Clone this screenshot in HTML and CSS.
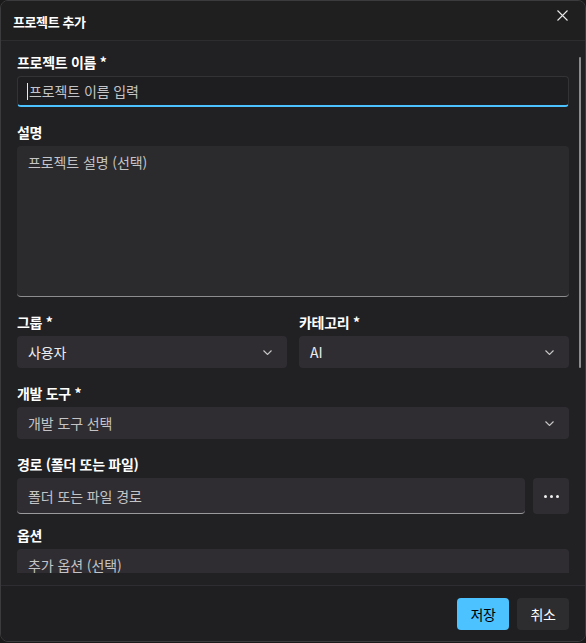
FILE: index.html
```html
<!DOCTYPE html>
<html lang="ko">
<head>
<meta charset="utf-8">
<link rel="stylesheet" href="styles.css">
</head>
<body>
<div class="dialog">
  <div class="header">
    <div class="title">프로젝트 추가</div>
    <div class="close">
      <svg width="11" height="11" viewBox="0 0 11 11"><path d="M0.5 0.5 L10.5 10.5 M10.5 0.5 L0.5 10.5" stroke="#e8e8e8" stroke-width="1.1" fill="none"/></svg>
    </div>
  </div>
  <div class="body">
    <div class="scroll">
      <div class="field">
        <div class="label">프로젝트 이름 *</div>
        <div class="control input focused"><span class="caret"></span><span class="ph">프로젝트 이름 입력</span></div>
      </div>
      <div class="field">
        <div class="label">설명</div>
        <div class="control textarea"><span class="ph">프로젝트 설명 (선택)</span></div>
      </div>
      <div class="row2">
        <div class="field">
          <div class="label">그룹 *</div>
          <div class="control select"><span class="val">사용자</span><svg class="chev" width="9" height="5" viewBox="0 0 9 5"><path d="M0.5 0.5 L4.5 4.5 L8.5 0.5" stroke="#c8c8c8" stroke-width="1.1" fill="none"/></svg></div>
        </div>
        <div class="field">
          <div class="label">카테고리 *</div>
          <div class="control select"><span class="val">AI</span><svg class="chev" width="9" height="5" viewBox="0 0 9 5"><path d="M0.5 0.5 L4.5 4.5 L8.5 0.5" stroke="#c8c8c8" stroke-width="1.1" fill="none"/></svg></div>
        </div>
      </div>
      <div class="field">
        <div class="label">개발 도구 *</div>
        <div class="control select"><span class="ph">개발 도구 선택</span><svg class="chev" width="9" height="5" viewBox="0 0 9 5"><path d="M0.5 0.5 L4.5 4.5 L8.5 0.5" stroke="#c8c8c8" stroke-width="1.1" fill="none"/></svg></div>
      </div>
      <div class="field">
        <div class="label">경로 (폴더 또는 파일)</div>
        <div class="pathrow">
          <div class="control input path"><span class="ph">폴더 또는 파일 경로</span></div>
          <div class="more"><span></span><span></span><span></span></div>
        </div>
      </div>
      <div class="field opt-field">
        <div class="label">옵션</div>
        <div class="control input opt"><span class="ph">추가 옵션 (선택)</span></div>
      </div>
    </div>
    <div class="scrollbar"></div>
  </div>
  <div class="footer">
    <button class="btn primary">저장</button>
    <button class="btn">취소</button>
  </div>
</div>
</body>
</html>
```
FILE: styles.css
```css
* { box-sizing: border-box; }
html, body { margin: 0; padding: 0; background: #1a1a1a; }
body {
  font-family: "Noto Sans CJK KR", "Noto Sans", sans-serif;
  color: #fff;
  width: 586px;
  height: 643px;
}
.dialog {
  width: 586px;
  height: 642px;
  border: 1px solid #3b3b3d;
  border-radius: 8px;
  background: #212023;
  display: flex;
  flex-direction: column;
  overflow: hidden;
}
.header {
  height: 40px;
  flex: none;
  background: #1f1f20;
  border-bottom: 1px solid #2d2d2f;
  display: flex;
  align-items: center;
  justify-content: space-between;
  padding: 0 17px 0 12px;
}
.title {
  font-size: 13px;
  font-weight: 700;
  letter-spacing: -0.4px;
  margin-top: 1px;
}
.close { display: flex; margin-top: -10px; }
.body {
  flex: 1;
  position: relative;
  padding-bottom: 12px;
  border-bottom: 1px solid #2e2d31;
  display: flex;
  flex-direction: column;
  min-height: 0;
}
.scroll {
  flex: 1;
  overflow: hidden;
  padding: 11px 16px 0 16px;
  display: flex;
  flex-direction: column;
  gap: 15px;
}
.scrollbar {
  position: absolute;
  right: 4px;
  top: 16px;
  width: 2px;
  height: 311px;
  background: #8c8c8e;
  border-radius: 1px;
}
.field { display: flex; flex-direction: column; gap: 4px; flex: none; }
.opt-field { margin-top: -4px; }
.label {
  font-size: 14px;
  font-weight: 700;
  line-height: 20px;
  height: 20px;
  letter-spacing: -0.3px;
}
.control {
  border-radius: 4px;
  display: flex;
  align-items: center;
  padding: 0 11px;
  font-size: 14px;
  letter-spacing: -0.1px;
}
.ph { color: #c4c4c6; }
.val { color: #ececec; }
.input.focused {
  height: 31px;
  background: #1e1e20;
  border: 1px solid #333335;
  border-bottom: 2px solid #4cc2ff;
  padding-left: 9px;
}
.caret {
  display: inline-block;
  width: 1px;
  height: 17px;
  background: #e8e8e8;
  margin-right: 1px;
}
.textarea {
  height: 151px;
  background: #2b2b2d;
  border-bottom: 1px solid #8d8d8f;
  align-items: flex-start;
  padding-top: 6px;
}
.row2 { display: grid; grid-template-columns: 1fr 1fr; gap: 12px; }
.select {
  height: 32px;
  background: #2f2d32;
  justify-content: space-between;
  padding-right: 15px;
}
.chev { flex: none; }
.pathrow { display: flex; gap: 8px; }
.path {
  flex: 1;
  height: 36px;
  background: #2f2d32;
  border-bottom: 1px solid #9a9a9c;
}
.more {
  width: 36px;
  height: 36px;
  background: #2f2d32;
  border-radius: 4px;
  display: flex;
  align-items: center;
  justify-content: center;
  gap: 3px;
}
.more span { width: 3px; height: 3px; background: #f0f0f0; border-radius: 50%; }
.opt {
  height: 32px;
  background: #2f2d32;
  flex: none;
}
.footer {
  height: 55px;
  flex: none;
  background: #1f1e21;
  display: flex;
  justify-content: flex-end;
  align-items: flex-start;
  padding: 12px 16px 0 0;
  gap: 8px;
}
.btn {
  width: 52px;
  height: 32px;
  border: none;
  border-radius: 4px;
  background: #2d2c2f;
  color: #fff;
  font-family: inherit;
  font-size: 14px;
  letter-spacing: -0.3px;
  padding: 0;
}
.btn.primary { background: #4cc2ff; color: #000; }
```
